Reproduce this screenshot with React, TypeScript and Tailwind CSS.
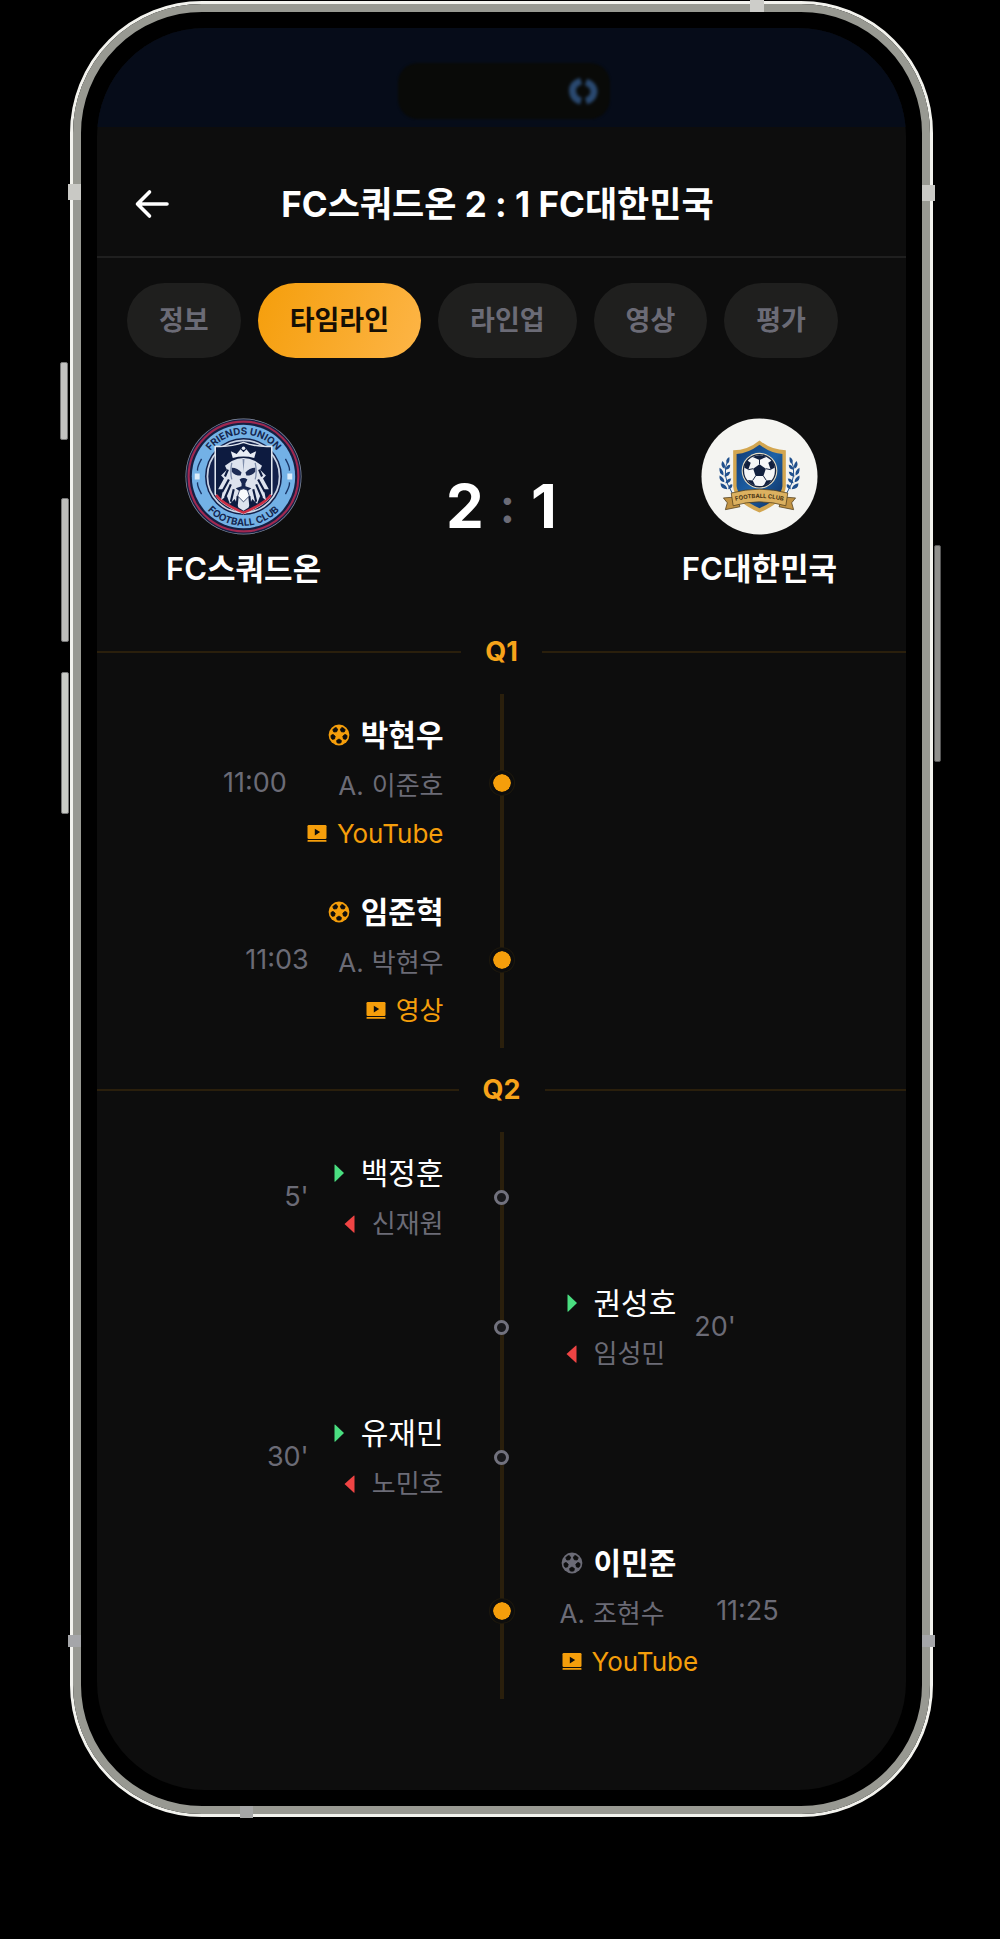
import { useId, useState, type ReactNode } from 'react';

type Side = 'home' | 'away';

type MatchEvent = {
  id: string;
  kind: 'goal' | 'sub';
  side: Side;
  time: string;
  player: string;
  second: string;
  link?: string;
};

type Quarter = {
  id: string;
  events: MatchEvent[];
};

const tabs = ['정보', '타임라인', '라인업', '영상', '평가'];

const quarters: Quarter[] = [
  {
    id: 'Q1',
    events: [
      { id: 'q1-1', kind: 'goal', side: 'home', time: '11:00', player: '박현우', second: '이준호', link: 'YouTube' },
      { id: 'q1-2', kind: 'goal', side: 'home', time: '11:03', player: '임준혁', second: '박현우', link: '영상' },
    ],
  },
  {
    id: 'Q2',
    events: [
      { id: 'q2-1', kind: 'sub', side: 'home', time: "5'", player: '백정훈', second: '신재원' },
      { id: 'q2-2', kind: 'sub', side: 'away', time: "20'", player: '권성호', second: '임성민' },
      { id: 'q2-3', kind: 'sub', side: 'home', time: "30'", player: '유재민', second: '노민호' },
      { id: 'q2-4', kind: 'goal', side: 'away', time: '11:25', player: '이민준', second: '조현수', link: 'YouTube' },
    ],
  },
];

function BackIcon() {
  return (
    <svg viewBox="0 0 36 36" className="size-9" fill="none" stroke="currentColor" strokeWidth="3.6" strokeLinecap="round" strokeLinejoin="round" aria-hidden="true">
      <path d="M34 18H4.500M16.500 6L4.500 18L16.500 30" />
    </svg>
  );
}

function BallIcon() {
  return (
    <svg viewBox="0 0 24 24" className="size-6" aria-hidden="true">
      <circle cx="12" cy="12" r="10.400" fill="currentColor" />
      <g fill="#0d0d0d">
        {[36, 108, 180, 252, 324].map((angle) => (
          <path key={angle} transform={`rotate(${angle} 12 12)`} d="M12 8L9.600 6.500L10 4.200Q12 3.300 14 4.200L14.400 6.500Z" stroke="#0d0d0d" strokeWidth=".8" strokeLinejoin="round" />
        ))}
      </g>
    </svg>
  );
}

function VideoIcon() {
  return (
    <svg viewBox="0 0 24 24" className="size-6" aria-hidden="true">
      <rect x="2.500" y="3" width="19" height="14" rx="1.200" fill="currentColor" />
      <rect x="2.500" y="18" width="19" height="1.800" rx=".6" fill="currentColor" />
      <path d="M9.800 6.800V13.500L15.200 10.100Z" fill="#0d0d0d" />
    </svg>
  );
}

function InIcon() {
  return (
    <svg viewBox="0 0 24 24" className="size-6 text-[#4ade80]" fill="currentColor" aria-hidden="true">
      <path d="M7.500 4Q7.500 3 8.300 3.700L17 12L8.300 20.600Q7.500 21.200 7.500 20.300Z" />
    </svg>
  );
}

function OutIcon() {
  return (
    <svg viewBox="0 0 24 24" className="size-6 text-[#ef4444]" fill="currentColor" aria-hidden="true">
      <path d="M16.500 4Q16.500 3 15.700 3.700L6.500 12L15.700 20.600Q16.500 21.200 16.500 20.300Z" />
    </svg>
  );
}

function LionCrest() {
  const id = useId();
  return (
    <svg viewBox="0 0 120 120" className="size-[117px]" role="img" aria-label="Friends Union Football Club">
      <defs>
        <path id={`${id}t`} d="M17 60A43 43 0 0 1 103 60" />
        <path id={`${id}b`} d="M9.500 60A50.500 50.500 0 0 0 110.500 60" />
      </defs>
      <circle cx="60" cy="60" r="59.500" fill="#8b94a8" />
      <circle cx="60" cy="60" r="58.800" fill="#141f42" />
      <circle cx="60" cy="60" r="56.300" fill="none" stroke="#a02850" strokeWidth="2.200" />
      <circle cx="60" cy="60" r="53" fill="#73b1e6" />
      <circle cx="60" cy="60" r="39.500" fill="#12204a" />
      <circle cx="60" cy="60" r="37" fill="none" stroke="#c9d3e4" strokeWidth="1.800" />
      <path d="M17 42Q12 51 13 54M17 78Q12 69 13 66M103 42Q108 51 107 54M103 78Q108 69 107 66" fill="none" stroke="#1b3768" strokeWidth="1.400" />
      <path d="M10 57h5v6h-5zM105 57h5v6h-5z" fill="#dcecfa" />
      <path d="M31 29Q47 30 60 25Q73 30 89 29V78Q83 89 60 98Q37 89 31 78Z" fill="#0d1b40" stroke="#dfe5ee" strokeWidth="1.600" />
      <path d="M32 79Q38 88 60 97Q82 88 88 79" fill="none" stroke="#c92f45" strokeWidth="2.600" />
      <g fill="#14264f" className="font-['Inter'] text-[10px] font-bold">
        <text textAnchor="middle"><textPath href={`#${id}t`} startOffset="50%">FRIENDS UNION</textPath></text>
        <text textAnchor="middle"><textPath href={`#${id}b`} startOffset="50%">FOOTBALL CLUB</textPath></text>
      </g>
      <path d="M49 41L47 34L53 37L57 32L60 35L63 32L67 37L73 34L71 41Q60 38 49 41Z" fill="#e8edf5" />
      <circle cx="60" cy="31" r="1.800" fill="#e8edf5" />
      <path d="M48 44Q60 38 72 44L79 49L77 53L83 59L80 62L86 73L81 73L83 84L77 80L74 88L69 83L65 92L60 95L55 92L51 83L46 88L43 80L37 84L39 73L34 73L40 62L37 59L43 53L41 49Z" fill="#dde3ee" />
      <path d="M45 63L38 76M47 68L41 82M50 73L47 86M54 80L53 90M75 63L82 76M73 68L79 82M70 73L73 86M66 80L67 90M44 53L41 60M76 53L79 60" stroke="#0d1b40" strokeWidth="2.200" fill="none" />
      <path d="M48 46Q46 55 48 63M72 46Q74 55 72 63" fill="none" stroke="#7f8eac" strokeWidth="1.300" />
      <path d="M48 51Q54 51 58 56L57 59Q51 59 48 55ZM72 51Q66 51 62 56L63 59Q69 59 72 55Z" fill="#1c2b54" />
      <path d="M56 63Q60 60 64 63L62 67V70L68 72L64 75Q60 71 56 75L52 72L58 70V67Z" fill="#162650" />
      <path d="M56 74Q60 71 64 74L66 80L60 86L54 80Z" fill="#f7f9fc" stroke="#162650" strokeWidth=".8" />
      <path d="M59 42h2l-1 13z" fill="#7f8eac" />
    </svg>
  );
}

function ShieldCrest() {
  const id = useId();
  return (
    <svg viewBox="0 0 120 120" className="size-[117px]" role="img" aria-label="Football Club">
      <defs>
        <linearGradient id={`${id}g`} x1="0" x2="1" y2="1">
          <stop offset="0" stopColor="#103a75" />
          <stop offset=".5" stopColor="#1d61a6" />
          <stop offset="1" stopColor="#0d2c5d" />
        </linearGradient>
        <path id={`${id}r`} d="M33 85.500Q60 78.500 87 85.500" />
      </defs>
      <circle cx="60" cy="60" r="59.500" fill="#f4f4f1" />
      <path d="M60 23Q72 33 87 33V70Q86 86 60 97Q34 86 33 70V33Q48 33 60 23Z" fill="#d3a650" />
      <path d="M60 27.500Q72 36.500 83.500 37V70Q82 83 60 92.500Q38 83 36.500 70V37Q48 36.500 60 27.500Z" fill={`url(#${id}g)`} />
      <circle cx="60" cy="54" r="18.300" fill="#e9dfc5" />
      <circle cx="60" cy="54" r="17.200" fill="#152340" />
      <circle cx="60" cy="54" r="15.800" fill="#f5f6f8" />
      <path d="M60 47.500L66.500 52L64 59.500H56L53.500 52Z" fill="#111f3e" />
      <path d="M53 40L60 43L67 40Q60 36.500 53 40ZM44.500 51L48.500 53L51 46L47.500 43.500Q44.500 47 44.500 51ZM75.500 51L71.500 53L69 46L72.500 43.500Q75.500 47 75.500 51ZM48 63.500L53 64L55.500 69Q50.500 68 48 63.500ZM72 63.500L67 64L64.500 69Q69.500 68 72 63.500Z" fill="#111f3e" />
      <path d="M60 43V47.500M66.500 52L71.500 53M64 59.500L67 64M56 59.500L53 64M53.500 52L48.500 53" stroke="#111f3e" strokeWidth="1" />
      {['', 'translate(120 0) scale(-1 1)'].map((flip) => (
        <g key={flip} transform={flip} fill="#1f4f8c">
          <path d="M28 42Q20 58 32 77" fill="none" stroke="#1f4f8c" strokeWidth="1" />
          <path d="M27 47Q24 43 29 40Q30 45 27 47ZM24 52Q19 49 22 44Q26 48 24 52ZM25 53Q26 48 30 48Q30 53 25 53ZM23 59Q18 57 19 51Q24 54 23 59ZM24 60Q25 55 30 55Q29 60 24 60ZM24 66Q18 65 19 59Q24 61 24 66ZM25 67Q26 62 31 62Q30 67 25 67ZM27 73Q20 73 20 67Q26 68 27 73ZM28 73Q28 68 32 68Q33 72 28 73Z" />
        </g>
      ))}
      <path d="M36 81L23 82L27 87L25 94L40 91ZM84 81L97 82L93 87L95 94L80 91Z" fill="#c29343" stroke="#54401d" strokeWidth=".8" />
      <path d="M31 77Q60 69 89 77L87 90Q60 82 33 90Z" fill="#dcb160" stroke="#54401d" strokeWidth=".8" />
      <text textAnchor="middle" fill="#4a3413" className="font-['Inter'] text-[6px] font-bold">
        <textPath href={`#${id}r`} startOffset="50%">FOOTBALL CLUB</textPath>
      </text>
    </svg>
  );
}

function Team({ name, children }: { name: string; children: ReactNode }) {
  return (
    <div className="flex flex-col items-center gap-[13px]">
      {children}
      <p className="text-[31px] leading-[42px] font-semibold">{name}</p>
    </div>
  );
}

function EventBody({ event }: { event: MatchEvent }) {
  const goal = event.kind === 'goal';
  const away = event.side === 'away';
  return (
    <div className={`flex flex-col gap-1.5 ${away ? 'items-start' : 'items-end'}`}>
      <p className={`flex items-center gap-2.5 text-[30px] leading-[48px] ${goal ? 'font-bold' : ''}`}>
        {goal ? <span className={away ? 'text-[#6b6b76]' : 'text-[#f59e0b]'}><BallIcon /></span> : <InIcon />}
        {event.player}
      </p>
      <p className={`flex items-center text-[26px] leading-[42px] text-[#6b6b76] ${goal ? 'gap-2' : 'gap-2.5'}`}>
        {goal ? <span>A.</span> : <OutIcon />}
        {event.second}
      </p>
      {event.link && (
        <a href="#video" className="flex items-center gap-2 text-[26px] leading-[42px] text-[#f59e0b]">
          <VideoIcon />
          {event.link}
        </a>
      )}
    </div>
  );
}

function EventRow({ event }: { event: MatchEvent }) {
  const goal = event.kind === 'goal';
  const time = <time className="text-[27px] leading-[42px] text-[#6b6b76]">{event.time}</time>;
  return (
    <li className={`grid grid-cols-[1fr_116px_1fr] items-center ${goal ? 'min-h-[177px]' : 'min-h-[130px]'}`}>
      <div className="flex items-center justify-end gap-[18px]">
        {event.side === 'home' && <>{time}<EventBody event={event} /></>}
      </div>
      <div className="relative flex justify-center self-stretch">
        <span className="w-1 bg-[#2a1f0c]" />
        <span className="absolute inset-0 flex items-center justify-center">
          {goal
            ? <span className="size-6 rounded-full border-[3px] border-[#0d0d0d] bg-[#f59e0b] bg-clip-padding ring-1 ring-[#1d180d]" />
            : <span className="size-[15px] rounded-full border-[3px] border-[#71717d] bg-[#18181b]" />}
        </span>
      </div>
      <div className="flex items-center gap-[18px]">
        {event.side === 'away' && <><EventBody event={event} />{time}</>}
      </div>
    </li>
  );
}

// Side buttons and antenna bands sit on top of the metal frame
function FrameDetails() {
  return (
    <div aria-hidden="true">
      <span className="absolute top-[358px] -left-[13px] h-[78px] w-2 rounded-xs border border-[#777] bg-[#c2c2c0]" />
      <span className="absolute top-[494px] -left-[12px] h-[144px] w-2 rounded-xs border border-[#777] bg-[#bdbdbb]" />
      <span className="absolute top-[668px] -left-[12px] h-[142px] w-2 rounded-xs border border-[#777] bg-[#c9cbc6]" />
      <span className="absolute top-[541px] -right-[11px] h-[217px] w-[7px] rounded-xs border border-[#555] bg-[#8f8f8c]" />
      <span className="absolute top-[180px] -left-[5px] h-4 w-[13px] bg-[#c9c9c5]" />
      <span className="absolute top-[181px] -right-[5px] h-4 w-[13px] bg-[#c9c9c5]" />
      <span className="absolute -top-1 right-[166px] h-3 w-[14px] bg-[#cdcdc9]" />
      <span className="absolute bottom-[167px] -left-[5px] h-3 w-[13px] bg-[#a5a6a9]" />
      <span className="absolute -right-[5px] bottom-[167px] h-3 w-[13px] bg-[#a5a6a9]" />
      <span className="absolute -bottom-1 left-[167px] h-3 w-[13px] bg-[#a5a6a6]" />
    </div>
  );
}

export default function App() {
  const [activeTab, setActiveTab] = useState('타임라인');

  return (
    <main className="min-h-screen bg-black pt-px pr-[67px] pb-10 pl-[70px] font-['Inter','Noto_Sans_CJK_KR',sans-serif] text-white">
      <div className="relative rounded-[132px] border-[3px] border-[#f3f3ee]">
        <div className="rounded-[129px] border-8 border-[#989992] bg-black p-4">
          <div className="overflow-hidden rounded-[108px] bg-[#0d0d0d] pb-[91px]">
            <div className="flex h-[99px] items-end justify-center bg-[#060c19] pb-2 pl-1">
              <div className="flex h-14 w-[212px] items-center justify-end rounded-[20px] bg-[#090a08] pr-3 blur-[1px]">
                <svg viewBox="0 0 30 30" className="size-[30px] blur-[1px]" fill="none" stroke="#2a4970" strokeWidth="7" aria-hidden="true">
                  <path d="M13 5Q4 8 4.500 15Q5 23 13 25" />
                  <path d="M18 6Q26 9 26 16Q25 23 18 25" />
                </svg>
              </div>
            </div>

            <header className="grid grid-cols-[36px_1fr_36px] items-center border-b-2 border-[#1f1f1f] pt-[50px] pr-11 pb-[25px] pl-9">
              <button type="button" aria-label="뒤로" className="cursor-pointer">
                <BackIcon />
              </button>
              <h1 className="text-center text-[35px] leading-[54px] font-bold">FC스쿼드온 2 : 1 FC대한민국</h1>
            </header>

            <nav className="flex gap-[17px] px-[30px] pt-[25px]">
              {tabs.map((tab) => (
                <button
                  key={tab}
                  type="button"
                  onClick={() => setActiveTab(tab)}
                  className={`h-[75px] shrink-0 cursor-pointer rounded-full px-8 pt-0.5 text-[27px] font-semibold ${
                    activeTab === tab
                      ? 'bg-linear-[110deg] from-[#f59e0b] to-[#fdb547] text-[#150f05]'
                      : 'bg-[#1f1f1e] text-[#6b6b76]'
                  }`}
                >
                  {tab}
                </button>
              ))}
            </nav>

            <section className="flex items-center justify-between px-[69px] pt-[60px] pb-5">
              <Team name="FC스쿼드온"><LionCrest /></Team>
              <p className="flex items-center gap-4 pt-1 text-[60px] leading-[60px] font-bold">
                <span>2</span>
                <span className="text-[48px] font-semibold text-[#6b6b76]">:</span>
                <span>1</span>
              </p>
              <Team name="FC대한민국"><ShieldCrest /></Team>
            </section>

            {quarters.map((quarter) => (
              <section key={quarter.id}>
                <h2 className="flex items-center gap-6 py-[21px] text-[27px] leading-[42px] font-bold text-[#f7a31a] before:h-0.5 before:flex-1 before:bg-[#2a1f0c] after:h-0.5 after:flex-1 after:bg-[#2a1f0c]">
                  {quarter.id}
                </h2>
                <ol>
                  {quarter.events.map((event) => (
                    <EventRow key={event.id} event={event} />
                  ))}
                </ol>
              </section>
            ))}
          </div>
        </div>
        <FrameDetails />
      </div>
    </main>
  );
}
